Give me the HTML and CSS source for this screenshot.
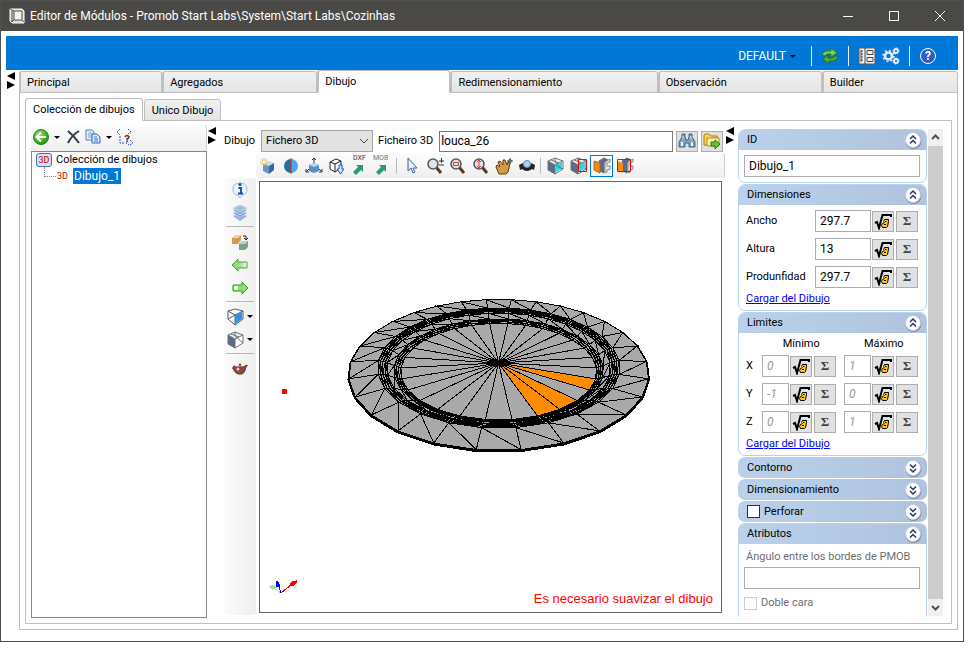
FILE: index.html
```html
<!DOCTYPE html>
<html lang="es">
<head>
<meta charset="utf-8">
<title>Editor de Módulos</title>
<link rel="stylesheet" href="styles.css">
</head>
<body>
<svg class="defs" aria-hidden="true">
  <defs>
    <radialGradient id="gGreen" cx=".4" cy=".3" r=".8"><stop offset="0" stop-color="#8ee05a"/><stop offset="1" stop-color="#118a08"/></radialGradient>
    <linearGradient id="gArrow" x1="0" y1="0" x2="1" y2="0"><stop offset="0" stop-color="#86cf72"/><stop offset=".6" stop-color="#a9e096"/><stop offset="1" stop-color="#f2fbee"/></linearGradient>
    <symbol id="sqrt" viewBox="0 0 18 18"><path d="M1 11l2-1 2 6L8.500 3H17v2" fill="none" stroke="#000" stroke-width="2"/><path d="M9.500 9.500l1-2h4v2l-1 5-1 1h-4l-1-2 1-2 2-1" fill="#ffc20e" stroke="#000"/><path d="M10 12.500h2M11 9.500h1.500" stroke="#000"/></symbol>
    <symbol id="up" viewBox="0 0 18 18"><circle cx="9.500" cy="10" r="8" fill="#7d8eab"/><circle cx="9" cy="9" r="7.500" fill="#fff" stroke="#c4cbdc"/><path d="M6 8l3-3 3 3M6 12.500l3-3 3 3" fill="none" stroke="#27366e" stroke-width="1.500"/></symbol>
    <symbol id="down" viewBox="0 0 18 18"><circle cx="9.500" cy="10" r="8" fill="#7d8eab"/><circle cx="9" cy="9" r="7.500" fill="#fff" stroke="#c4cbdc"/><path d="M6 5.500l3 3 3-3M6 10l3 3 3-3" fill="none" stroke="#27366e" stroke-width="1.500"/></symbol>
    <symbol id="split" viewBox="0 0 9 18"><path d="M8 0v8L0 4zM0 9v8l8-4z"/></symbol>
    <symbol id="lens" viewBox="0 0 18 18"><path d="M10 10l5 6" stroke="#5a3a24" stroke-width="3"/><circle cx="7" cy="7" r="5" fill="#dde3e6" stroke="#555b60" stroke-width="1.600"/></symbol>
    <symbol id="cube" viewBox="0 0 18 18"><path d="M1 4l7 4v9l-7-4z" fill="#5a6b8c"/><path d="M1 4l7-3 8 3-8 4z" fill="#eef1f4"/><path d="M8 8l8-4v8l-8 5z" fill="#fff"/><path d="M1 4l7-3 8 3v8l-8 5-7-4zM1 4l7 4 8-4M8 8v9M8 1v4l8 7M4 3l8 3" fill="none" stroke="#6b7178"/></symbol>
    <symbol id="solid" viewBox="0 0 18 18"><path d="M4 7l6-3 5 2-5 3z" fill="#c6dff3"/><path d="M4 7l6 2v8l-6-3z" fill="#6698c6"/><path d="M10 9l5-3v7l-5 4z" fill="#34699c"/></symbol>
  </defs>
</svg>

<main class="window">
  <header class="titlebar">
    <svg class="app-icon" viewBox="0 0 16 16"><path d="M1 1h12l2 2v12H3l-2-2z" fill="#d8d8d6" stroke="#fff"/><path d="M5 3h8v9H5z" fill="#f4f4f2" stroke="#55534f"/><path d="M1 1l4 2M5 12l-3 2M13 12l2 2M3 3v11" fill="none" stroke="#55534f"/></svg>
    <h1>Editor de Módulos - Promob Start Labs\System\Start Labs\Cozinhas</h1>
    <div class="window-buttons">
      <button aria-label="Minimizar"><svg viewBox="0 0 12 12"><path d="M1 6.500h10"/></svg></button>
      <button aria-label="Maximizar"><svg viewBox="0 0 12 12"><path d="M1.500 1.500h9v9h-9z"/></svg></button>
      <button aria-label="Cerrar"><svg viewBox="0 0 12 12"><path d="M1 1l10 10M11 1L1 11"/></svg></button>
    </div>
  </header>

  <div class="client">
    <nav class="ribbon">
      <button class="profile">DEFAULT <i class="caret"></i></button>
      <span class="rule"></span>
      <button aria-label="Actualizar"><svg viewBox="0 0 18 18"><path d="M1 8q2-5 9-4V1l6 5-6 4V7Q5 6 4 9z" fill="#7fd05a" stroke="#2c7a26"/><path d="M17 9q-1 6-9 5v3l-6-5 5-4v3q5 1 7-2z" fill="#4fae3c" stroke="#216b1e"/></svg></button>
      <span class="rule"></span>
      <button aria-label="Propiedades"><svg viewBox="0 0 18 18"><path d="M1 1h16v16H1z" fill="#f6f4ee" stroke="#555"/><path d="M3 3v12M7 1v16M3 4h2M3 7h2M3 10h2M3 13h2M9 3.500h6v4H9zM9 10.500h6v4H9z" fill="none" stroke="#444"/></svg></button>
      <button aria-label="Configuración"><svg viewBox="0 0 18 18" fill="none" stroke="#e8eef5"><circle cx="6.500" cy="9" r="3.500" stroke-width="2.500"/><circle cx="6.500" cy="9" r="5.500" stroke-width="1.500" stroke-dasharray="2 2.300"/><circle cx="14" cy="4" r="2" stroke-width="1.800"/><circle cx="14" cy="4" r="3.200" stroke-dasharray="1 1.500"/><circle cx="14" cy="14" r="2" stroke-width="1.800"/><circle cx="14" cy="14" r="3.200" stroke-dasharray="1 1.500"/></svg></button>
      <span class="rule"></span>
      <button class="help" aria-label="Ayuda">?</button>
    </nav>

    <div class="workspace">
      <svg class="splitter"><use href="#split"/></svg>
      <div class="pages">
        <div class="tabs main-tabs" role="tablist">
          <button role="tab">Principal</button>
          <button role="tab">Agregados</button>
          <button role="tab" aria-selected="true">Dibujo</button>
          <button role="tab">Redimensionamiento</button>
          <button role="tab">Observación</button>
          <button role="tab">Builder</button>
        </div>
        <section class="page">
          <div class="tabs sub-tabs" role="tablist">
            <button role="tab" aria-selected="true">Colección de dibujos</button>
            <button role="tab">Unico Dibujo</button>
          </div>
          <div class="editor">
            <aside class="collection">
              <div class="bar collection-bar">
                <button aria-label="Añadir"><svg viewBox="0 0 18 18"><circle cx="9" cy="9" r="7.500" fill="url(#gGreen)" stroke="#188a14"/><path d="M14 9H5M9 4.500L4.500 9 9 13.500" fill="none" stroke="#fff" stroke-width="2.200"/></svg></button><i class="caret"></i>
                <button aria-label="Eliminar"><svg viewBox="0 0 18 18"><path d="M4 3q6 5 11 12M15 3Q8 7 4 15" fill="none" stroke="#333a48" stroke-width="2"/></svg></button>
                <button aria-label="Copiar"><svg viewBox="0 0 18 18"><path d="M2 2h6l2 2v8H2z" fill="#e3efff" stroke="#557fc0"/><path d="M4 5h4M4 7h4M4 9h4" stroke="#7f9ed0"/><path d="M8 6h5l3 3v6H8z" fill="#d8e8fc" stroke="#3867b0"/><path d="M10 9h3M10 11h4M10 13h4" stroke="#4f7cc0"/></svg></button><i class="caret"></i>
                <button aria-label="Ayuda del árbol"><svg viewBox="0 0 18 18"><path d="M4 1L1 4l3 3M12 1l3 3-3 2M4 8v7h5M12 12l-2 3 3 2M14 12l3 3-3 2" fill="none" stroke="#2a54c8" stroke-dasharray="2 1"/><path d="M9 9q2-3 4 0 0 1-2 2v1m0 1v1" fill="none" stroke="#6b3d16" stroke-width="1.700"/></svg></button>
              </div>
              <ul class="tree">
                <li><span class="badge3d">3D</span>Colección de dibujos
                  <ul><li><span class="node3d">3D</span><span class="selected">Dibujo_1</span></li></ul>
                </li>
              </ul>
            </aside>
            <svg class="splitter"><use href="#split"/></svg>

            <section class="drawing">
              <div class="file-row">
                <label for="kind">Dibujo</label>
                <span class="select"><select id="kind"><option>Fichero 3D</option></select><svg viewBox="0 0 10 6"><path d="M1 1l4 4 4-4"/></svg></span>
                <label for="file">Ficheiro 3D</label>
                <input id="file" type="text" value="louca_26">
                <button class="push" aria-label="Buscar"><svg viewBox="0 0 18 18"><path d="M4 2h3v3l1 3h2l1-3V2h3v3l3 5v5h-6v-4H7v4H1v-5l3-5z" fill="#83a5be" stroke="#3e647f"/><path d="M3 10h2v4H3zM13 10h2v4h-2z" fill="#e2f5fb"/><path d="M5 4v3M13 4v3" stroke="#d5e8f2"/></svg></button>
                <button class="push" aria-label="Abrir carpeta"><svg viewBox="0 0 18 18"><path d="M1 3l1-1h4l2 2h6v9H1z" fill="#f7d64c" stroke="#a87f18"/><path d="M4 6h12v8H4z" fill="#fff0a3" stroke="#b3892a"/><path d="M8 10h4V8l5 4-5 5v-3H8z" fill="#62c832" stroke="#267818"/></svg></button>
              </div>

              <div class="bar tools">
                <button aria-label="Nuevo"><svg viewBox="0 0 18 18"><use href="#solid"/><path d="M5 1v8M1 5h8M2 2l6 6M8 2l-6 6" stroke="#e7b92c"/><circle cx="5" cy="5" r="1.500" fill="#fff"/></svg></button>
                <button aria-label="Espejar"><svg viewBox="0 0 18 18"><path d="M9 2a7 7 0 0 0 0 14z" fill="#25709a"/><path d="M9 2a7 7 0 0 1 0 14z" fill="#4fa5ec"/><path d="M9 1v16" stroke="#d22"/></svg></button>
                <button aria-label="Mover"><svg viewBox="0 0 18 18"><path d="M9 8V1M7 3l2-2 2 2M4 12l-3 3M1 12v3h3M14 12l3 3M17 12v3h-3" fill="none" stroke="#333"/><path d="M4 8l5-2 5 2v6l-5 2-5-2z" fill="#5d91c4"/><path d="M4 8l5-2 5 2-5 2z" fill="#b9d9f1"/></svg></button>
                <button aria-label="Insertar"><svg viewBox="0 0 18 18"><path d="M2 5l6-3 5 2v7l-6 4-5-3zM2 5l5 2 6-3M7 7v8" fill="#fff" stroke="#222"/><path d="M11 8h3v4h2l-3.500 5L9 12h2z" fill="#cfe4ff" stroke="#1462c6"/></svg></button>
                <button class="io" aria-label="Exportar DXF"><span>DXF</span><svg viewBox="0 0 18 18"><path d="M2 15l5-5-2-2 7 0v7l-2-2-5 5z" fill="#2b9b75"/></svg></button>
                <button class="io mob" aria-label="Exportar MOB"><span>MOB</span><svg viewBox="0 0 18 18"><path d="M2 15l5-5-2-2 7 0v7l-2-2-5 5z" fill="#2b9b75"/></svg></button>
                <span class="sep"></span>
                <button aria-label="Seleccionar"><svg viewBox="0 0 18 18"><path d="M5 1v13l3-3 2 5 2-1-2-4h4z" fill="#e5efff" stroke="#42618f"/></svg></button>
                <button aria-label="Zoom"><svg viewBox="0 0 18 18"><use href="#lens"/><path d="M13 4h5M15.500 1v5M13 8h5" stroke="#333"/></svg></button>
                <button aria-label="Zoom de área"><svg viewBox="0 0 18 18"><use href="#lens"/><path d="M4.500 5.500h5v3h-5z" fill="none" stroke="#c64141"/></svg></button>
                <button aria-label="Zoom vertical"><svg viewBox="0 0 18 18"><use href="#lens"/><path d="M7 3v8M5 5l2-2 2 2M5 9l2 2 2-2" fill="none" stroke="#e33"/></svg></button>
                <button aria-label="Desplazar"><svg viewBox="0 0 18 18"><path d="M4 17L1 10l1-2 3 2-2-5 2-1 3 4 0-5 2 0 2 5 1-3 2 1-1 5-1 4-2 2z" fill="#d79a44" stroke="#5c3815"/><path d="M12 4h6M15 1v6" stroke="#555"/><circle cx="15" cy="4" r="1.500" fill="none" stroke="#555"/></svg></button>
                <button aria-label="Girar"><svg viewBox="0 0 18 18"><path d="M1 8l4-2v2q4 4 8 0V6l4 2-1 5-2-1q-5 4-10 0l-2 1z" fill="#222"/><circle cx="9" cy="7" r="3.500" fill="#a9cff5" stroke="#6087b0"/></svg></button>
                <span class="sep"></span>
                <button aria-label="Cara"><svg viewBox="0 0 18 18"><use href="#cube"/><path d="M8.500 8.500L15 5v6.500l-6.500 4z" fill="#1de0e8"/><path d="M9 8l6 4" stroke="#477"/></svg></button>
                <button aria-label="Cara en área"><svg viewBox="0 0 18 18"><use href="#cube"/><path d="M8.500 8.500L15 5v6.500l-6.500 4z" fill="#1de0e8"/><path d="M8.500 2.500h8v12h-8z" fill="none" stroke="#f00"/></svg></button>
                <button class="on" aria-label="Superficie"><svg viewBox="0 0 18 18"><path d="M6 4l5-3 4 2-4 3v10l-4-2V7z" fill="#5a6b8c" stroke="#667"/><path d="M12 5l5-3v3l-3 1v3h3v3l-3 1v2l-2 1z" fill="#e6e7e9" stroke="#888"/><path d="M1 4l6 2v10l-6-3z" fill="#f78b0a" stroke="#a96a30"/></svg></button>
                <button aria-label="Superficie en área"><svg viewBox="0 0 18 18"><path d="M6 4l5-3 4 2-4 3v10l-4-2V7z" fill="#5a6b8c" stroke="#667"/><path d="M12 5l5-3v3l-3 1v3h3v3l-3 1v2l-2 1z" fill="#e6e7e9" stroke="#888"/><path d="M1 4l6 2v10l-6-3z" fill="#f78b0a"/><path d="M1.500 2.500h13v12h-13z" fill="none" stroke="#f00"/></svg></button>
              </div>

              <div class="stage">
                <div class="bar side-tools">
                  <button aria-label="Información"><svg viewBox="0 0 18 18"><path d="M9 2q7 0 7 6t-5 6l-2 3-2-3q-5 0-5-6t7-6" fill="#eaf5ff" stroke="#a8bccd"/><path d="M7.500 7H10v5M7 12.500h5" fill="none" stroke="#124b9c" stroke-width="1.800"/><circle cx="9" cy="3.500" r="1.500" fill="#124b9c"/></svg></button>
                  <button aria-label="Capas"><svg viewBox="0 0 18 18" fill="#86a7d1" stroke="#c9d9ec"><path d="M2 12l7-3 7 3-7 5z"/><path d="M2 9l7-3 7 3-7 5z"/><path d="M2 6l7-3 7 3-7 5z"/><path d="M2 4l7-3 7 3-7 4z" fill="#a2bde0"/></svg></button>
                  <span class="sep"></span>
                  <button aria-label="Cambiar"><svg viewBox="0 0 18 18"><path d="M1 5l4-3h5v5l-3 4H1z" fill="#d29a55"/><path d="M1 5l4-3h5L7 5z" fill="#f3cf9a"/><path d="M8 11l3-3h6v6l-3 3H8z" fill="#76a58e"/><path d="M8 11l3-3h6l-3 3z" fill="#b5d9c6"/><path d="M12 3h3v3M13 5l2 2 2-2" fill="none" stroke="#222"/></svg></button>
                  <button aria-label="Anterior"><svg viewBox="0 0 18 18"><path d="M1 9l6-6v3h9v6H7v3z" fill="url(#gArrow)" stroke="#4fa544"/></svg></button>
                  <button aria-label="Siguiente"><svg viewBox="0 0 18 18"><path d="M17 9l-6-6v3H2v6h9v3z" fill="#8fdc71" stroke="#2f9c20"/><path d="M3 7h4v4H3z" fill="#e5f8dc"/></svg></button>
                  <span class="sep"></span>
                  <button class="wide" aria-label="Vista"><svg viewBox="0 0 18 18"><path d="M1 3l7-2 8 2v8l-8 6-7-6zM1 3l7 4v10M8 7l8-4M1 11l7-4" fill="#fff" stroke="#555b62"/><path d="M8 7l7-3v7l-7 5z" fill="#2d91ec"/></svg><i class="caret"></i></button>
                  <button class="wide" aria-label="Sombreado"><svg viewBox="0 0 18 18"><use href="#cube"/></svg><i class="caret"></i></button>
                  <span class="sep"></span>
                  <button aria-label="Render"><svg viewBox="0 0 18 18"><path d="M2 7q1-2 3 0h7l4-2q1 1-1 2-1 6-4 7H7q-3-1-4-4-2-1-1-3" fill="#8a4c38" stroke="#6d3a2c"/><path d="M6 7q3-4 6 0z" fill="#b88171"/><circle cx="9" cy="4.500" r="1" fill="#5c2c22"/><circle cx="7" cy="9" r="1.500" fill="#efd0c0"/></svg></button>
                </div>
                <div class="viewport">
                  <svg id="scene" viewBox="0 0 459 430" shape-rendering="crispEdges">
                    <g id="plate"></g>
                    <path d="M21 207h5v5h-5z" fill="#f00"/>
                    <path d="M20 411l-8-6" stroke="#90ee90"/><path d="M7 404l6-1 3 3-5 2z" fill="#90ee90"/>
                    <path d="M20 411l-2-7" stroke="#00f"/><path d="M15 404l1-5 3 4-2 2z" fill="#00f" stroke="#00f"/>
                    <path d="M20 411l16-13" stroke="#f00"/><path d="M29 402l4-3h3l-3 4h-3z" fill="#f00" stroke="#f00"/>
                  </svg>
                  <p class="warning">Es necesario suavizar el dibujo</p>
                </div>
              </div>
            </section>
            <svg class="splitter"><use href="#split"/></svg>

            <aside class="props">
              <div class="groups">
                <section class="group">
                  <h2>ID<button aria-label="Contraer"><svg><use href="#up"/></svg></button></h2>
                  <div class="content"><input class="full" type="text" value="Dibujo_1" aria-label="ID"></div>
                </section>
                <section class="group">
                  <h2>Dimensiones<button aria-label="Contraer"><svg><use href="#up"/></svg></button></h2>
                  <div class="content">
                    <div class="field"><label for="w">Ancho</label><input id="w" type="text" value="297.7"><button class="push" aria-label="Fórmula"><svg><use href="#sqrt"/></svg></button><button class="push sum">Σ</button></div>
                    <div class="field"><label for="h">Altura</label><input id="h" type="text" value="13"><button class="push" aria-label="Fórmula"><svg><use href="#sqrt"/></svg></button><button class="push sum">Σ</button></div>
                    <div class="field"><label for="d">Produnfidad</label><input id="d" type="text" value="297.7"><button class="push" aria-label="Fórmula"><svg><use href="#sqrt"/></svg></button><button class="push sum">Σ</button></div>
                    <a href="#">Cargar del Dibujo</a>
                  </div>
                </section>
                <section class="group">
                  <h2>Limites<button aria-label="Contraer"><svg><use href="#up"/></svg></button></h2>
                  <div class="content">
                    <div class="range-head"><span>Mínimo</span><span>Máximo</span></div>
                    <div class="field range"><label for="x0">X</label><input id="x0" type="text" value="0"><button class="push" aria-label="Fórmula"><svg><use href="#sqrt"/></svg></button><button class="push sum">Σ</button><input class="max" type="text" value="1" aria-label="X máximo"><button class="push" aria-label="Fórmula"><svg><use href="#sqrt"/></svg></button><button class="push sum">Σ</button></div>
                    <div class="field range"><label for="y0">Y</label><input id="y0" type="text" value="-1"><button class="push" aria-label="Fórmula"><svg><use href="#sqrt"/></svg></button><button class="push sum">Σ</button><input class="max" type="text" value="0" aria-label="Y máximo"><button class="push" aria-label="Fórmula"><svg><use href="#sqrt"/></svg></button><button class="push sum">Σ</button></div>
                    <div class="field range"><label for="z0">Z</label><input id="z0" type="text" value="0"><button class="push" aria-label="Fórmula"><svg><use href="#sqrt"/></svg></button><button class="push sum">Σ</button><input class="max" type="text" value="1" aria-label="Z máximo"><button class="push" aria-label="Fórmula"><svg><use href="#sqrt"/></svg></button><button class="push sum">Σ</button></div>
                    <a href="#">Cargar del Dibujo</a>
                  </div>
                </section>
                <section class="group closed"><h2>Contorno<button aria-label="Expandir"><svg><use href="#down"/></svg></button></h2></section>
                <section class="group closed"><h2>Dimensionamiento<button aria-label="Expandir"><svg><use href="#down"/></svg></button></h2></section>
                <section class="group closed"><h2><label class="check"><input type="checkbox">Perforar</label><button aria-label="Expandir"><svg><use href="#down"/></svg></button></h2></section>
                <section class="group last">
                  <h2>Atributos<button aria-label="Contraer"><svg><use href="#up"/></svg></button></h2>
                  <div class="content muted">
                    <label class="caption" for="angle">Ángulo entre los bordes de PMOB</label>
                    <input class="full" id="angle" type="text">
                    <label class="check"><input type="checkbox" disabled>Doble cara</label>
                  </div>
                </section>
              </div>
              <div class="scrollbar">
                <svg viewBox="0 0 15 17"><path d="M4 10l3.500-3.500L11 10"/></svg>
                <span class="thumb"></span>
                <svg viewBox="0 0 15 17"><path d="M4 7l3.500 3.500L11 7"/></svg>
              </div>
            </aside>
          </div>
        </section>
      </div>
    </div>
  </div>
</main>
<script src="plate.js"></script>
</body>
</html>
```
FILE: styles.css
```css
* { box-sizing: border-box; }
body {
  margin: 0;
  padding: 0 9px 9px 0;
  height: 100vh;
  background: #fff;
  color: #000;
  font: 11px/16px Roboto, "Liberation Sans", sans-serif;
}
button, input, select { font: inherit; color: inherit; margin: 0; border-radius: 0; }
button { display: flex; align-items: center; justify-content: center; padding: 0; border: 0; background: none; }
button svg { width: 18px; height: 18px; flex: none; }
h1, h2, p, ul { margin: 0; padding: 0; font-size: inherit; font-weight: normal; }
ul { list-style: none; }
a { color: #00f; text-decoration: underline; }
.defs { position: absolute; width: 0; height: 0; }

.window { display: flex; flex-direction: column; height: 100%; border: 1px solid #4f4f4f; background: #fff; }
.titlebar { display: flex; align-items: center; flex: none; height: 30px; padding-left: 8px; background: #4b4946; color: #fff; font-size: 12px; }
.app-icon { width: 16px; height: 16px; margin-right: 5px; }
.window-buttons { display: flex; margin-left: auto; }
.window-buttons button { width: 46px; height: 28px; }
.window-buttons svg { width: 12px; height: 12px; fill: none; stroke: #fff; }

.client { display: flex; flex-direction: column; flex: 1; min-height: 0; padding: 5px 5px 11px; }
.ribbon { display: flex; align-items: center; justify-content: flex-end; flex: none; height: 34px; padding: 6px 20px 0 0; background: #0078d7; color: #fff; font-size: 12px; }
.ribbon > button { width: 24px; }
.ribbon > .profile { width: auto; gap: 4px; margin-right: 9px; }
.rule { width: 1px; height: 20px; margin: 0 6px; background: #e4effa; }
.ribbon > .help { width: 16px; height: 16px; margin: 0 2px 0 4px; border: 1px solid #fff; border-radius: 50%; background: #2f5fc4; font-weight: bold; }
.caret { border: 3px solid transparent; border-top-color: #000; border-bottom: 0; }

.workspace { display: flex; flex: 1; min-height: 0; }
.splitter { flex: none; width: 9px; height: 18px; margin: 2px 2px 0 1px; }
.pages { display: flex; flex-direction: column; flex: 1; min-width: 0; margin-left: 1px; }
.tabs { display: flex; align-items: flex-end; position: relative; z-index: 1; flex: none; }
.tabs button { height: 22px; justify-content: flex-start; border: 1px solid #bfbfbf; border-left-width: 2px; border-radius: 3px 3px 0 0; padding: 1px 6px 0; background: linear-gradient(#f1f1f1, #e4e4e4); }
.tabs button[aria-selected] { height: 23px; border-bottom-color: #fff; background: #fff; }
.main-tabs { height: 23px; display: grid; grid-template-columns: 143fr 155fr 133fr 207fr 164fr 136fr; align-items: end; }
.page { display: flex; flex-direction: column; flex: 1; min-height: 0; margin-top: -1px; padding: 5px; border: 1px solid #bfbfbf; }
.sub-tabs button { padding: 1px 7px 0; border-left-width: 1px; margin-right: 1px; }
.editor { display: flex; flex: 1; min-height: 0; margin-top: -1px; padding: 4px 8px 5px 5px; border: 1px solid #bfbfbf; }

.bar { display: flex; align-items: center; background: linear-gradient(#fcfcfc, #efefef); border-radius: 3px; }
.bar button { width: 23px; height: 22px; }
.sep { flex: none; width: 2px; height: 16px; margin: 0 2px; border-left: 1px solid #b8b8b8; }
.collection { display: flex; flex-direction: column; flex: none; width: 176px; }
.collection-bar { flex: none; height: 26px; padding-bottom: 2px; border-right: 1px solid #ccc; }
.collection-bar button { width: 20px; }
.collection-bar .caret { margin: 0 3px; }
.tree { flex: 1; padding: 0 4px; border: 1px solid #82878f; background: #fff; }
.badge3d { display: inline-block; width: 16px; height: 14px; margin-right: 4px; border: 1px solid #4673a8; border-radius: 3px; background: #cfe2f6; color: #c00; font-size: 9px; line-height: 12px; text-align: center; }
.node3d { width: 12px; margin-right: 4px; color: #b00; font-size: 9px; }
.tree ul li { display: flex; align-items: center; height: 16px; }
.tree ul li::before { content: ""; width: 11px; height: 9px; margin: 0 1px 8px 8px; border: dotted #888; border-width: 0 0 1px 1px; }
.selected { padding: 0 1px; background: #0078d7; color: #fff; font-size: 12px; }

.drawing { display: flex; flex-direction: column; flex: 1; min-width: 0; margin-left: 5px; }
.file-row { display: flex; align-items: center; flex: none; height: 28px; padding: 5px 2px 1px 0; }
.file-row label { flex: none; margin-right: 6px; }
.file-row .push { margin-left: 3px; }
.select { position: relative; width: 112px; height: 22px; margin-right: 5px; }
.select select { width: 100%; height: 100%; padding: 0 4px; appearance: none; border: 1px solid #a5a5a5; background: #e2e2e2; }
.select svg { position: absolute; right: 4px; top: 8px; width: 10px; height: 6px; fill: none; stroke: #444; }
input[type="text"] { min-width: 0; height: 22px; padding: 0 4px; border: 1px solid #abadb3; background: #fff; font-size: 12px; }
.file-row input[type="text"] { flex: 1; height: 21px; padding: 0 1px; border-color: #7a7a7a; }
.push { flex: none; width: 22px; height: 21px; border: 1px solid #adadad; background: #e1e1e1; }
.tools { flex: none; height: 25px; margin-left: 32px; border-right: 1px solid #ccc; }
.io { position: relative; }
.io span { position: absolute; top: 0; left: 5px; font-size: 7px; line-height: 7px; color: #333; }
.io.mob span { left: 2px; color: #777; }
.bar .on { border: 1px solid #0078d7; }

.stage { display: flex; flex: 1; min-height: 0; gap: 3px; margin-right: 3px; }
.side-tools { flex: none; flex-direction: column; width: 32px; margin-bottom: 3px; background: linear-gradient(90deg, #fbfbfb, #efefef); }
.side-tools button { flex: none; height: 23px; }
.side-tools .wide { width: 32px; gap: 2px; }
.side-tools .sep { width: 28px; height: 2px; margin: 2px 0; border: 0; border-top: 1px solid #b8b8b8; }
.viewport { position: relative; flex: 1; min-width: 0; margin: 3px 0 5px; border: 1px solid #646464; background: #fff; }
#scene { display: block; width: 100%; height: 100%; }
.warning { position: absolute; right: 8px; bottom: 5px; color: #f00; font: 13px/16px "Liberation Sans", Arial, sans-serif; }

.props { display: flex; flex: none; width: 205px; margin-left: 1px; gap: 1px; padding-bottom: 2px; }
.groups { display: flex; flex-direction: column; flex: 1; min-width: 0; gap: 1px; padding-top: 4px; overflow: hidden; }
.group { flex: none; border: 1px solid #b9d2ed; border-radius: 7px; overflow: hidden; }
.group h2 { display: flex; align-items: center; justify-content: space-between; height: 20px; padding: 0 4px 0 8px; background: linear-gradient(90deg, #bbd1eb, #afc3df); }
.group.closed { border: 0; }
.group.closed h2 { height: 21px; padding: 0 5px 0 9px; }
.content { display: flex; flex-direction: column; align-items: flex-start; gap: 6px; padding: 5px 7px 3px; }
.group a { margin-top: -3px; }
.content .full { align-self: stretch; margin: 0 -1px 2px -2px; }
.field { display: flex; align-items: center; align-self: stretch; }
.field label { width: 69px; }
.field input[type="text"] { width: 56px; }
.field .push { margin-left: 1px; }
.field .sum { margin-left: 2px; font: bold 13px/16px "Liberation Serif", serif; color: #444; }
.field.range label { width: 16px; }
.field.range input[type="text"] { width: 27px; color: #999; font-style: italic; }
.field.range .max { margin-left: 8px; }
.range-head { display: grid; grid-template-columns: 1fr 1fr; align-self: stretch; margin: -2px -6px -3px 14px; text-align: center; }
.check { display: flex; align-items: center; gap: 4px; }
.check input { appearance: none; width: 13px; height: 13px; border: 1px solid #333; background: #fff; }
.check input:disabled { border-color: #ccc; }
.group.last { flex: 1; border-bottom: 0; border-radius: 7px 7px 0 0; }
.muted { color: #6d6d6d; gap: 4px; }
.caption { margin-bottom: -2px; white-space: nowrap; }
.muted .check { margin-left: -2px; }
.scrollbar { display: flex; flex-direction: column; flex: none; width: 15px; margin-top: 4px; background: #cdcdcd; }
.scrollbar svg { height: 17px; background: #f0f0f0; fill: none; stroke: #505050; stroke-width: 2; }
.thumb { flex: 1; }
```
FILE: plate.js
```js
// Perspective wireframe of a plate: concentric rings of 28 vertices, triangulated.
const SIDES = 28;
const CX = 237.7, RADIUS = 143.8, TILT = 69.4, DEPTH = 0.284;
const HUB = [237.5, 181];
const RINGS = [
  [1, 171.5], [0.82, 172], [0.805, 172.5], [0.79, 173], [0.775, 173.5], [0.76, 174.5],
  [0.715, 178], [0.7, 178.5], [0.685, 179.5], [0.67, 180.5]
];
const SELECTED = [1, 2, 4];

function project(r, y, i) {
  const t = (i + 0.5) * 2 * Math.PI / SIDES;
  const s = r / (1 - DEPTH * r * Math.cos(t));
  return [CX + RADIUS * s * Math.sin(t), y + TILT * s * Math.cos(t)];
}
const vertex = (ring, i) => project(RINGS[ring][0], RINGS[ring][1], i);
const loop = (r, y) => Array.from({ length: SIDES }, (_, i) => project(r, y, i));

function add(points, fill, width) {
  const p = document.createElementNS('http://www.w3.org/2000/svg', 'path');
  p.setAttribute('d', 'M' + points.map(q => q.map(n => n.toFixed(1)).join(' ')).join('L') + 'z');
  p.setAttribute('fill', fill);
  p.setAttribute('stroke', '#000');
  p.setAttribute('stroke-width', width);
  document.getElementById('plate').appendChild(p);
}

// Rim thickness shows below the top face.
add(loop(1, 172.5), '#000', 3);
for (let k = 0; k < RINGS.length - 1; k++) {
  for (let i = 0; i < SIDES; i++) {
    add([vertex(k, i), vertex(k, i + 1), vertex(k + 1, i)], '#a9a9a9', 1);
    add([vertex(k, i + 1), vertex(k + 1, i + 1), vertex(k + 1, i)], '#a9a9a9', 1);
  }
}
const last = RINGS.length - 1;
for (let i = 0; i < SIDES; i++) {
  add([HUB, vertex(last, i), vertex(last, i + 1)], SELECTED.includes(i) ? '#ff8c00' : '#a9a9a9', 1);
}
add(loop(0.04, 181), '#000', 1);
```
